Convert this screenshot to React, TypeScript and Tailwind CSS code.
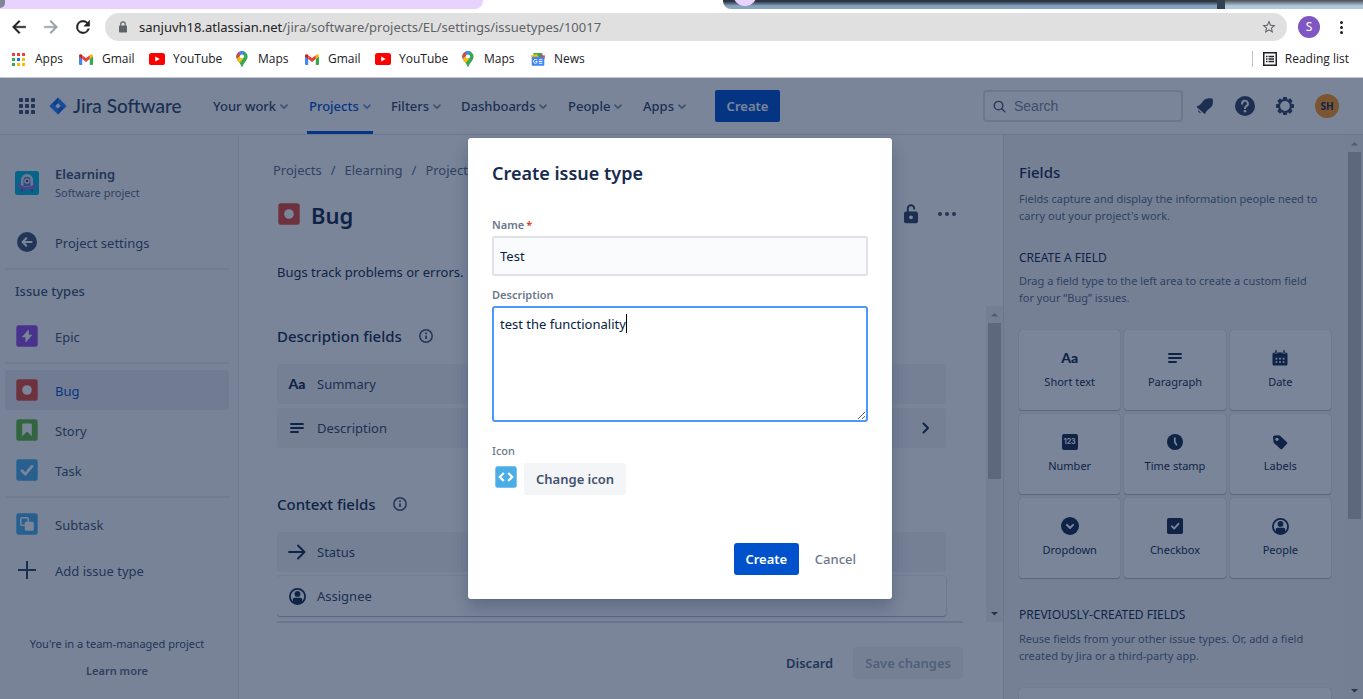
import { useState } from "react";
import type { ReactNode } from "react";

type IconProps = { className?: string };

/* ---------- browser icons ---------- */

function BackIcon({ className = "" }: IconProps) {
  return (
    <svg viewBox="0 0 24 24" className={className} fill="currentColor" aria-hidden="true">
      <path d="M20 11H7.83l5.59-5.59L12 4l-8 8 8 8 1.41-1.41L7.83 13H20v-2z" stroke="currentColor" strokeWidth="0.5" />
    </svg>
  );
}

function ReloadIcon() {
  return (
    <svg viewBox="0 0 24 24" className="size-5" fill="currentColor" aria-hidden="true">
      <path
        d="M17.65 6.35A7.96 7.96 0 0 0 12 4a8 8 0 1 0 7.73 10h-2.08A6 6 0 1 1 12 6c1.66 0 3.14.69 4.22 1.78L13 11h7V4l-2.35 2.35z"
        stroke="currentColor"
        strokeWidth="0.5"
      />
    </svg>
  );
}

function PadlockIcon() {
  return (
    <svg viewBox="0 0 10 12" className="h-3 w-2.5" aria-hidden="true">
      <rect x="1" y="4.5" width="8" height="7" rx="0.8" fill="#5f6368" />
      <path d="M2.8 5V3a2.2 2.2 0 0 1 4.4 0v2" fill="none" stroke="#5f6368" strokeWidth="1.2" />
    </svg>
  );
}

function StarIcon() {
  return (
    <svg viewBox="0 0 24 24" className="size-4" fill="#5f6368" aria-hidden="true">
      <path d="M22 9.24l-7.19-.62L12 2 9.19 8.63 2 9.24l5.46 4.73L5.82 21 12 17.27 18.18 21l-1.63-7.03L22 9.24zM12 15.4l-3.76 2.27 1-4.28-3.32-2.88 4.38-.38L12 6.1l1.71 4.04 4.38.38-3.32 2.88 1 4.28L12 15.4z" />
    </svg>
  );
}

function GoogleAppsIcon() {
  const fills = ["#ea4335", "#ea4335", "#ea4335", "#34a853", "#1a73e8", "#fbbc04", "#34a853", "#fbbc04", "#fbbc04"];
  return (
    <svg viewBox="0 0 13 13" className="size-[13px]" aria-hidden="true">
      {fills.map((fill, i) => (
        <rect key={i} x={(i % 3) * 5} y={Math.floor(i / 3) * 5} width="3" height="3" fill={fill} />
      ))}
    </svg>
  );
}

function GmailIcon() {
  return (
    <svg viewBox="0 0 14 11" className="h-[11px] w-3.5" aria-hidden="true">
      <path d="M0 2v8a1 1 0 0 0 1 1h2.2V4.6z" fill="#4285f4" />
      <path d="M14 2v8a1 1 0 0 1-1 1h-2.2V4.6z" fill="#34a853" />
      <path d="M10.8 1.2 11.5.6C12.6-.3 14 .4 14 1.8V2.6l-3.2 2.5z" fill="#fbbc04" />
      <path d="M3.2 1.2 2.5.6C1.4-.3 0 .4 0 1.8v.8l3.2 2.5z" fill="#c5221f" />
      <path d="M3.2 1.2 7 4.1l3.8-2.9v3.9L7 8 3.2 5.1z" fill="#ea4335" />
    </svg>
  );
}

function YouTubeIcon() {
  return (
    <svg viewBox="0 0 16 12" className="h-3 w-4" aria-hidden="true">
      <rect width="16" height="12" rx="2.6" fill="#f00" />
      <path d="M6.2 3.4v5.2L10.8 6z" fill="#fff" />
    </svg>
  );
}

function MapsIcon() {
  return (
    <svg viewBox="0 0 12 16" className="h-4 w-3" aria-hidden="true">
      <defs>
        <clipPath id="pin">
          <path d="M6 0a5.6 5.6 0 0 1 5.6 5.6c0 2.2-1 3.5-2.4 5.3C7.9 12.5 7 13.5 6.7 15.3c-.2.9-1.2.9-1.4 0C5 13.5 4.1 12.5 2.8 10.9 1.4 9.1.4 7.8.4 5.6A5.6 5.6 0 0 1 6 0z" />
        </clipPath>
      </defs>
      <g clipPath="url(#pin)">
        <rect width="12" height="16" fill="#34a853" />
        <path d="M0 11.5 9 .5 12 3v-3H0z" fill="#4285f4" />
        <path d="M0 0h2L4.5 4 0 9z" fill="#ea4335" />
        <path d="M0 8.5 4 5l3 3-4.5 5.5H0z" fill="#fbbc04" />
      </g>
      <circle cx="6" cy="5.5" r="2.1" fill="#fff" />
    </svg>
  );
}

function NewsIcon() {
  return (
    <svg viewBox="0 0 14 13" className="h-[13px] w-3.5" aria-hidden="true">
      <path d="M2.5 0h9v5h-9z" fill="#34a853" />
      <path d="M0 2.5 6 1l2 4H1z" fill="#fbbc04" />
      <path d="M14 2.5 9 2v4h4.5z" fill="#ea4335" />
      <rect x="0.7" y="3.8" width="12.6" height="9" rx="0.8" fill="#4285f4" />
      <path d="M6 7.3a1.9 1.9 0 1 0 .3 1.3H4.600" fill="none" stroke="#fff" strokeWidth="1" />
      <path d="M7.8 6.7h3.6M7.8 8.5h3.6M7.8 10.3h3.6" stroke="#fff" strokeWidth="0.9" />
    </svg>
  );
}

function ReadingListIcon() {
  return (
    <svg viewBox="0 0 14 14" className="size-3.5" aria-hidden="true">
      <rect x="0.75" y="0.75" width="12.5" height="12.5" fill="none" stroke="#202124" strokeWidth="1.5" />
      <path d="M3 4.5h1.5M3 7h1.5M3 9.5h1.5M5.5 4.5H11M5.5 7H11M5.5 9.5H11" stroke="#202124" strokeWidth="1.3" />
    </svg>
  );
}

/* ---------- product icons ---------- */

function SwitcherIcon() {
  return (
    <svg viewBox="0 0 16 16" className="size-4" fill="#42526e" aria-hidden="true">
      {[0, 6, 12].map((y) =>
        [0, 6, 12].map((x) => <rect key={`${x}-${y}`} x={x} y={y} width="4" height="4" rx="0.8" />),
      )}
    </svg>
  );
}

function JiraMark() {
  return (
    <svg viewBox="0 0 18 18" className="size-[18px]" aria-hidden="true">
      <path d="M9 .5 17.2 8.5a.7.7 0 0 1 0 1L9 17.5.8 9.5a.7.7 0 0 1 0-1z" fill="#2684ff" />
      <path d="M9 .5v5.7L6.2 9 3.8 6.5z" fill="#1868db" />
      <path d="M9 17.5v-5.7L11.8 9l2.4 2.5z" fill="#1868db" />
      <path d="M9 6.3 11.7 9 9 11.7 6.3 9z" fill="#fff" />
    </svg>
  );
}

function ChevronDown() {
  return (
    <svg viewBox="0 0 8 6" className="h-1.5 w-2 opacity-60" aria-hidden="true">
      <path d="M1 1.2 4 4.2l3-3" fill="none" stroke="currentColor" strokeWidth="1.7" strokeLinecap="round" strokeLinejoin="round" />
    </svg>
  );
}

function SearchIcon() {
  return (
    <svg viewBox="0 0 14 14" className="size-[13px] shrink-0" fill="none" stroke="#42526e" strokeWidth="1.4" strokeLinecap="round" aria-hidden="true">
      <circle cx="6" cy="6" r="4.6" />
      <path d="m9.5 9.5 3.3 3.3" />
    </svg>
  );
}

function NotificationIcon() {
  return (
    <svg viewBox="0 0 18 18" className="size-[18px]" fill="#344563" aria-hidden="true">
      <path d="M1 9.2c2-.3 4.3-2.5 6-5C8.5 2 11 1.2 13.5 1.3l2.6.2c.4 0 .7.3.7.7l.1 3c0 2.8-1.2 4.9-3.3 6.3-2 1.4-3.5 2.8-4.3 5-.2.5-.7.6-1 .2L.9 10.2c-.4-.4-.4-.9.1-1z" />
      <path d="M2.2 13a2.3 2.3 0 0 0 2.9 2.9z" />
    </svg>
  );
}

function HelpIcon() {
  return (
    <svg viewBox="0 0 20 20" className="size-5" aria-hidden="true">
      <circle cx="10" cy="10" r="10" fill="#344563" />
      <path d="M7.1 7.7A2.9 2.9 0 1 1 11.3 10.2c-.9.5-1.3.9-1.3 2" fill="none" stroke="#fff" strokeWidth="2" strokeLinecap="round" />
      <circle cx="10" cy="15.2" r="1.3" fill="#fff" />
    </svg>
  );
}

function GearIcon() {
  return (
    <svg viewBox="0 0 18 18" className="size-[18px]" aria-hidden="true">
      <circle cx="9" cy="9" r="5.9" fill="none" stroke="#344563" strokeWidth="2" />
      {[0, 45, 90, 135, 180, 225, 270, 315].map((a) => (
        <path key={a} d="M7.2 0h3.6l.5 2.8H6.7z" fill="#344563" transform={`rotate(${a} 9 9)`} />
      ))}
    </svg>
  );
}

function ProjectAvatar() {
  return (
    <svg viewBox="0 0 24 24" className="size-6" aria-hidden="true">
      <rect width="24" height="24" rx="2.5" fill="#00b8d9" />
      <path d="M7 18v2.5M17 18v2.5" stroke="#5243aa" strokeWidth="1.3" />
      <ellipse cx="12" cy="14.5" rx="9" ry="4.6" fill="#8777d9" />
      <path d="M6 14V9a6 6 0 0 1 12 0v5c-3 2-9 2-12 0z" fill="#dfe5f5" />
      <path d="M8.5 15V9.3a3.5 3.5 0 0 1 7 0V15z" fill="#5e7fc0" />
      <circle cx="12" cy="10" r="2.6" fill="#fff" />
      <circle cx="12" cy="10" r="1.3" fill="#253858" />
    </svg>
  );
}

function CircleBackIcon() {
  return (
    <svg viewBox="0 0 20 20" className="size-5" aria-hidden="true">
      <circle cx="10" cy="10" r="10" fill="#42526e" />
      <path d="M14.5 10H6M9.3 6.3 5.6 10l3.7 3.7" fill="none" stroke="#fff" strokeWidth="2" strokeLinecap="round" strokeLinejoin="round" />
    </svg>
  );
}

function Tile({ fill, children }: { fill: string; children: ReactNode }) {
  return (
    <svg viewBox="0 0 22 22" className="size-[22px]" aria-hidden="true">
      <rect x="0.3" y="0.3" width="21.4" height="21.4" rx="2.5" fill={fill} />
      {children}
    </svg>
  );
}

function EpicIcon() {
  return (
    <Tile fill="#904ee2">
      <path d="M12.5 5v5h3.3L9.8 17v-5H6.3z" fill="#fff" stroke="#fff" strokeWidth="0.6" strokeLinejoin="round" />
    </Tile>
  );
}
function BugIcon() {
  return (
    <Tile fill="#e5493a">
      <circle cx="11" cy="11" r="4.8" fill="#fff" />
    </Tile>
  );
}
function StoryIcon() {
  return (
    <Tile fill="#63ba3c">
      <path d="M6.2 5.5c0-.6.4-1 1-1h7.6c.6 0 1 .4 1 1v11.7L11 12.6l-4.8 4.6z" fill="#fff" />
    </Tile>
  );
}
function TaskIcon() {
  return (
    <Tile fill="#4bade8">
      <path d="m6 11.8 3.4 3.4 6.7-8" fill="none" stroke="#fff" strokeWidth="2.8" strokeLinecap="round" strokeLinejoin="round" />
    </Tile>
  );
}
function SubtaskIcon() {
  return (
    <Tile fill="#4bade8">
      <rect x="4.8" y="4.8" width="7.5" height="7.5" rx="1" fill="none" stroke="#fff" strokeWidth="1.5" />
      <rect x="8.8" y="8.8" width="9" height="9" rx="1.3" fill="#fff" />
    </Tile>
  );
}
function CodeIcon() {
  return (
    <Tile fill="#4bade8">
      <path d="M8.8 7 4.8 11l4 4M13.2 7l4 4-4 4" fill="none" stroke="#fff" strokeWidth="2.2" />
    </Tile>
  );
}

function PlusIcon() {
  return (
    <svg viewBox="0 0 18 18" className="size-[18px]" aria-hidden="true">
      <path d="M9 0v18M0 9h18" stroke="#344563" strokeWidth="2" />
    </svg>
  );
}

function InfoIcon() {
  return (
    <svg viewBox="0 0 14 14" className="size-3.5" aria-hidden="true">
      <circle cx="7" cy="7" r="6.2" fill="none" stroke="#42526e" strokeWidth="1.5" />
      <path d="M7 6.5V10" stroke="#42526e" strokeWidth="1.7" />
      <circle cx="7" cy="4.3" r="1" fill="#42526e" />
    </svg>
  );
}

function LockOpenIcon() {
  return (
    <svg viewBox="0 0 14 20" className="h-5 w-3.5" aria-hidden="true">
      <path d="M3.8 8V4.5a3.2 3.2 0 0 1 6.4 0V5.5" fill="none" stroke="#344563" strokeWidth="1.9" />
      <rect y="7.5" width="14" height="11.7" rx="2" fill="#344563" />
      <circle cx="7" cy="13.3" r="1.9" fill="#fff" />
    </svg>
  );
}

function MoreIcon() {
  return (
    <svg viewBox="0 0 18 4" className="h-1 w-[18px]" fill="#42526e" aria-hidden="true">
      <circle cx="2" cy="2" r="2" />
      <circle cx="9" cy="2" r="2" />
      <circle cx="16" cy="2" r="2" />
    </svg>
  );
}

function TextGlyph() {
  return <span className="font-['Lato'] text-[14px]/4 font-black">Aa</span>;
}
function LinesIcon() {
  return (
    <svg viewBox="0 0 14 12" className="h-3 w-3.5" aria-hidden="true">
      <path d="M1 2h12M1 6h12M1 10h7" stroke="#172b4d" strokeWidth="1.9" strokeLinecap="round" />
    </svg>
  );
}
function ArrowRightIcon() {
  return (
    <svg viewBox="0 0 18 16" className="h-4 w-[18px]" aria-hidden="true">
      <path d="M1 8h15M10 1.5 16.5 8 10 14.5" fill="none" stroke="#172b4d" strokeWidth="1.9" strokeLinecap="round" strokeLinejoin="round" />
    </svg>
  );
}
function PersonIcon() {
  return (
    <svg viewBox="0 0 17 17" className="size-[17px]" aria-hidden="true">
      <circle cx="8.5" cy="8.5" r="7.6" fill="none" stroke="#172b4d" strokeWidth="1.8" />
      <circle cx="8.5" cy="5.9" r="2.9" fill="#172b4d" />
      <path d="M3.8 14v-2.7A1.6 1.6 0 0 1 5.4 9.7h6.2a1.6 1.6 0 0 1 1.6 1.6V14a8 8 0 0 1-9.4 0z" fill="#172b4d" />
    </svg>
  );
}
function CalendarIcon() {
  return (
    <svg viewBox="0 0 16 16" className="size-4" aria-hidden="true">
      <path d="M2 2.5h12a1.5 1.5 0 0 1 1.5 1.5v10a1.5 1.5 0 0 1-1.5 1.5H2A1.5 1.5 0 0 1 .5 14V4A1.5 1.5 0 0 1 2 2.5z" fill="#172b4d" />
      <path d="M4 0v4M12 0v4" stroke="#fff" strokeWidth="2.6" />
      <path d="M4 .8v2.4M12 .8v2.4" stroke="#172b4d" strokeWidth="1.4" strokeLinecap="round" />
      <path d="M3.5 8.7h9M3.5 12h9" stroke="#fff" strokeWidth="1.7" strokeDasharray="1.8 1.8" />
    </svg>
  );
}
function NumberIcon() {
  return (
    <span className="flex size-4 items-center justify-center rounded-xs bg-[#172b4d] font-['Inter'] text-[7px] font-bold text-white">
      123
    </span>
  );
}
function ClockIcon() {
  return (
    <svg viewBox="0 0 16 16" className="size-4" aria-hidden="true">
      <circle cx="8" cy="8" r="8" fill="#172b4d" />
      <path d="M7.8 4v4.3l1.7 2.5" fill="none" stroke="#fff" strokeWidth="1.7" strokeLinecap="round" />
    </svg>
  );
}
function TagIcon() {
  return (
    <svg viewBox="0 0 16 16" className="size-4" aria-hidden="true">
      <path d="M1 3.2C1 2.1 1.6 1.5 2.7 1.4l4-.2c.6 0 1 .2 1.4.5l6.9 6.5c.5.5.5 1.1 0 1.6l-4.9 5.1c-.5.5-1.1.5-1.6 0L2 9c-.3-.4-.5-.8-.5-1.3z" fill="#172b4d" />
      <circle cx="5" cy="5.3" r="1.6" fill="#fff" />
    </svg>
  );
}
function DropdownIcon() {
  return (
    <svg viewBox="0 0 18 18" className="size-[18px]" aria-hidden="true">
      <circle cx="9" cy="9" r="9" fill="#172b4d" />
      <path d="m5.9 7.9 3.1 3.1 3.1-3.1" fill="none" stroke="#fff" strokeWidth="2" strokeLinecap="round" strokeLinejoin="round" />
    </svg>
  );
}
function CheckboxIcon() {
  return (
    <svg viewBox="0 0 16 16" className="size-4" aria-hidden="true">
      <rect width="16" height="16" rx="1.8" fill="#172b4d" />
      <path d="m4.8 8.2 2.3 2.4 4.3-4.8" fill="none" stroke="#fff" strokeWidth="1.9" strokeLinecap="round" strokeLinejoin="round" />
    </svg>
  );
}

/* ---------- browser ---------- */

function TabStrip() {
  return (
    <div className="flex h-[9px] justify-between overflow-hidden bg-white">
      <div className="w-[483px] overflow-hidden rounded-br-lg bg-[#e8d3ff]">
        <div className="h-2 w-[5px] rounded-br-full bg-[#808693]" />
      </div>
      <div className="flex h-full w-[640px] overflow-hidden rounded-bl-lg">
        <div className="flex-1 overflow-hidden bg-linear-to-b from-[#2b3544] from-15% to-[#86a3c0] to-65% pl-2.5">
          <div className="-mt-[18px] size-6 rounded-full bg-[#e8d3ff]" />
        </div>
        <div className="w-2 bg-[#33404f]" />
        <div className="w-[138px] bg-linear-to-b from-[#4b4f52] to-[#b0c8de] to-65%" />
      </div>
    </div>
  );
}

const bookmarks: { label: string; icon: ReactNode; spacing: string }[] = [
  { label: "Apps", icon: <GoogleAppsIcon />, spacing: "w-[67px] gap-2.5" },
  { label: "Gmail", icon: <GmailIcon />, spacing: "w-[70px] gap-[9px]" },
  { label: "YouTube", icon: <YouTubeIcon />, spacing: "w-[87px] gap-2" },
  { label: "Maps", icon: <MapsIcon />, spacing: "w-[69px] gap-2.5" },
  { label: "Gmail", icon: <GmailIcon />, spacing: "w-[70px] gap-[9px]" },
  { label: "YouTube", icon: <YouTubeIcon />, spacing: "w-[87px] gap-2" },
  { label: "Maps", icon: <MapsIcon />, spacing: "w-[69px] gap-2.5" },
  { label: "News", icon: <NewsIcon />, spacing: "w-[70px] gap-[9px]" },
];

function BrowserChrome() {
  return (
    <header className="shrink-0 border-b border-[#c4c7cd] bg-white text-[#202124]">
      <TabStrip />
      <div className="flex h-9 items-center">
        <div className="flex w-[105px] items-center gap-3 pl-[9px]">
          <button aria-label="Back"><BackIcon className="size-5" /></button>
          <button aria-label="Forward" className="text-[#9aa0a6]"><BackIcon className="size-5 rotate-180" /></button>
          <button aria-label="Reload"><ReloadIcon /></button>
        </div>
        <div className="flex h-7 flex-1 items-center gap-[11px] rounded-full bg-[#e0e0e0] pr-2.5 pl-[13px]">
          <PadlockIcon />
          <p className="flex-1 pt-0.5 text-[13px] text-[#5f6368]">
            <span className="text-[#202124]">sanjuvh18.atlassian.net</span>/jira/software/projects/EL/settings/issuetypes/10017
          </p>
          <button aria-label="Bookmark this page"><StarIcon /></button>
        </div>
        <button className="ml-[11px] flex size-[22px] items-center justify-center rounded-full bg-[#7e57c2] text-xs text-white">S</button>
        <button aria-label="Browser menu" className="mr-5 ml-5 flex flex-col gap-0.5">
          <span className="size-[3px] rounded-full bg-[#202124]" />
          <span className="size-[3px] rounded-full bg-[#202124]" />
          <span className="size-[3px] rounded-full bg-[#202124]" />
        </button>
      </div>
      <div className="flex h-8 items-center justify-between pr-3.5 pb-1 pl-3 font-['Open_Sans'] text-xs">
        <nav className="flex h-7 items-center">
          {bookmarks.map((b, i) => (
            <a key={i} href="#" className={`flex items-center ${b.spacing}`}>
              {b.icon}
              {b.label}
            </a>
          ))}
        </nav>
        <button className="flex items-center gap-2 border-l border-[#bdc1c6] pl-2.5">
          <ReadingListIcon />
          Reading list
        </button>
      </div>
    </header>
  );
}

/* ---------- page ---------- */

const menus = [
  { label: "Your work", width: "w-24" },
  { label: "Projects", width: "w-[82px]", active: true },
  { label: "Filters", width: "w-[70px]" },
  { label: "Dashboards", width: "w-[107px]" },
  { label: "People", width: "w-[75px]" },
  { label: "Apps", width: "w-[72px]" },
];

function TopNav() {
  return (
    <nav className="flex h-[57px] shrink-0 items-center border-b border-[#dfe1e6] bg-white pr-6 pl-[19px] shadow-[0_1px_2px_rgba(9,30,66,0.13)]">
      <button aria-label="Switch to"><SwitcherIcon /></button>
      <a href="#" className="ml-3.5 flex w-[164px] items-center gap-1.5 font-['Lato'] text-[19px] font-medium text-[#344563]">
        <JiraMark />
        Jira Software
      </a>
      <div className="flex h-full text-[13px] font-medium text-[#344563]">
        {menus.map((m) => (
          <div key={m.label} className={m.width}>
            <button
              className={
                m.active
                  ? "-mx-0.5 flex h-full items-center gap-1 border-b-3 border-[#0052cc] px-0.5 pt-[5px] text-[#0052cc]"
                  : "flex h-full items-center gap-1 pt-0.5"
              }
            >
              {m.label}
              <ChevronDown />
            </button>
          </div>
        ))}
      </div>
      <button className="h-8 w-[65px] rounded-xs bg-[#0052cc] pt-px text-[13px] font-semibold text-white">Create</button>
      <label className="ml-auto flex h-8 w-[200px] items-center gap-2 rounded border-2 border-[#dfe1e6] px-2">
        <SearchIcon />
        <input
          aria-label="Search"
          placeholder="Search"
          className="w-full font-['Liberation_Sans'] text-sm text-[#42526e] outline-none placeholder:text-[#7a869a]"
        />
      </label>
      <div className="ml-3 flex items-center gap-5">
        <button aria-label="Notifications" className="flex w-5 justify-center"><NotificationIcon /></button>
        <button aria-label="Help"><HelpIcon /></button>
        <button aria-label="Settings" className="flex w-5 justify-center"><GearIcon /></button>
        <button className="size-6 rounded-full bg-[#ff991f] text-[10px] font-bold text-[#172b4d]">SH</button>
      </div>
    </nav>
  );
}

function SideItem({ icon, label, active = false }: { icon: ReactNode; label: string; active?: boolean }) {
  return (
    <a
      href="#"
      className={`flex h-10 items-center gap-4 rounded-[3px] px-2.5 text-[13px] ${active ? "bg-[#ebecf0] text-[#0052cc]" : "text-[#42526e]"}`}
    >
      <span className="flex w-6 justify-center">{icon}</span>
      <span className="pt-1">{label}</span>
    </a>
  );
}

function Sidebar() {
  return (
    <aside className="w-[239px] shrink-0 border-r border-[#ebecf0] bg-[#fafbfc] pr-[9px] pl-[5px]">
      <div className="flex h-[87px] items-center gap-4 px-2.5 pt-[9px]">
        <ProjectAvatar />
        <div className="text-[#42526e]">
          <p className="text-[13px]/5 font-semibold">Elearning</p>
          <p className="text-[11px]/[18px] text-[#5e6c84]">Software project</p>
        </div>
      </div>
      <SideItem icon={<CircleBackIcon />} label="Project settings" />
      <div className="mt-1.5 border-t-2 border-[#ebecf0]" />
      <h2 className="px-2.5 pt-[11px] text-[13px]/5 font-medium text-[#42526e]">Issue types</h2>
      <div className="mt-[15px]"><SideItem icon={<EpicIcon />} label="Epic" /></div>
      <div className="my-1.5 border-t-2 border-[#ebecf0]" />
      <SideItem icon={<BugIcon />} label="Bug" active />
      <SideItem icon={<StoryIcon />} label="Story" />
      <SideItem icon={<TaskIcon />} label="Task" />
      <div className="my-1.5 border-t-2 border-[#ebecf0]" />
      <SideItem icon={<SubtaskIcon />} label="Subtask" />
      <div className="mt-1.5"><SideItem icon={<PlusIcon />} label="Add issue type" /></div>
      <div className="mt-[46px] flex flex-col items-center gap-[11px] text-[11px]/4 text-[#42526e]">
        <p>You're in a team-managed project</p>
        <a href="#" className="font-semibold text-[#5e6c84]">Learn more</a>
      </div>
    </aside>
  );
}

function Scrollbar({ thumb }: { thumb: string }) {
  return (
    <div className="flex w-[17px] shrink-0 flex-col items-center justify-between bg-[#f1f1f1]">
      <div className="flex h-full min-h-0 flex-col items-center">
        <svg viewBox="0 0 17 17" className="size-[17px] shrink-0" aria-hidden="true">
          <path d="M5 10.5h7L8.5 7z" fill="#a3a3a3" />
        </svg>
        <div className={`w-[13px] bg-[#c1c1c1] ${thumb}`} />
      </div>
      <svg viewBox="0 0 17 17" className="size-[17px] shrink-0" aria-hidden="true">
        <path d="M5 7h7l-3.5 3.5z" fill="#505050" />
      </svg>
    </div>
  );
}

function FieldRow({ icon, label, raised = false, expandable = false }: { icon: ReactNode; label: string; raised?: boolean; expandable?: boolean }) {
  return (
    <div
      className={`flex h-10 items-center gap-2 rounded-[3px] px-2 text-[13px] text-[#344563] ${raised ? "bg-white shadow-[0_1px_1px_rgba(9,30,66,0.25),0_0_1px_1px_rgba(9,30,66,0.08)]" : "bg-[#f4f5f7]"}`}
    >
      <span className="flex w-6 items-center justify-center text-[#172b4d]">{icon}</span>
      <span className="pt-px">{label}</span>
      {expandable && (
        <svg viewBox="0 0 8 12" className="mr-2 ml-auto h-3 w-2" aria-hidden="true">
          <path d="m1.5 1.5 4.5 4.5-4.5 4.5" fill="none" stroke="#172b4d" strokeWidth="2" strokeLinecap="round" strokeLinejoin="round" />
        </svg>
      )}
    </div>
  );
}

function SectionTitle({ children }: { children: ReactNode }) {
  return (
    <h2 className="flex items-center gap-[17px] text-[15px]/6 font-medium text-[#172b4d]">
      {children}
      <InfoIcon />
    </h2>
  );
}

function IssueTypeEditor() {
  return (
    <main className="flex min-w-0 flex-1 flex-col bg-white pl-[38px]">
      <div className="pr-10">
        <ol className="-ml-1 flex gap-[9px] pt-[25px] text-[13px]/5 whitespace-nowrap text-[#5e6c84]">
          <li><a href="#">Projects</a></li>
          <li>/</li>
          <li><a href="#">Elearning</a></li>
          <li>/</li>
          <li><a href="#">Project</a></li>
        </ol>
        <div className="mt-[17px] flex h-[34px] items-center">
          <span className="ml-px"><BugIcon /></span>
          <h1 className="ml-[11px] pt-0.5 text-[22px] font-semibold text-[#172b4d]">Bug</h1>
          <button aria-label="Permissions" className="ml-auto"><LockOpenIcon /></button>
          <button aria-label="More actions" className="mr-[7px] ml-5"><MoreIcon /></button>
        </div>
        <p className="mt-[31px] text-[13px]/5 text-[#172b4d]">Bugs track problems or errors.</p>
      </div>
      <div className="mt-6 flex h-[316px] overflow-hidden">
        <div className="min-w-0 flex-1 overflow-hidden">
          <div className="pt-[18px] pr-10">
            <SectionTitle>Description fields</SectionTitle>
            <div className="mt-4 grid gap-1">
              <FieldRow icon={<TextGlyph />} label="Summary" />
              <FieldRow icon={<LinesIcon />} label="Description" expandable />
            </div>
            <div className="mt-11">
              <SectionTitle>Context fields</SectionTitle>
            </div>
            <div className="mt-4 grid gap-1">
              <FieldRow icon={<ArrowRightIcon />} label="Status" />
              <FieldRow icon={<PersonIcon />} label="Assignee" raised />
            </div>
          </div>
        </div>
        <Scrollbar thumb="h-[156px]" />
      </div>
      <footer className="-mt-px mr-10 flex justify-end gap-2 border-t-2 border-[#dfe1e6] pt-6 text-[13px] font-semibold">
        <button className="h-8 px-3 pt-0.5 text-[#42526e]">Discard</button>
        <button disabled className="h-8 rounded-[3px] bg-[#f4f5f7] px-3 pt-0.5 text-[#a5adba]">Save changes</button>
      </footer>
    </main>
  );
}

const fieldTypes: { label: string; icon: ReactNode }[] = [
  { label: "Short text", icon: <TextGlyph /> },
  { label: "Paragraph", icon: <LinesIcon /> },
  { label: "Date", icon: <CalendarIcon /> },
  { label: "Number", icon: <NumberIcon /> },
  { label: "Time stamp", icon: <ClockIcon /> },
  { label: "Labels", icon: <TagIcon /> },
  { label: "Dropdown", icon: <DropdownIcon /> },
  { label: "Checkbox", icon: <CheckboxIcon /> },
  { label: "People", icon: <PersonIcon /> },
];

function FieldsPanel() {
  return (
    <aside className="flex w-[360px] shrink-0 overflow-hidden border-l border-[#dfe1e6] bg-[#f4f5f7]">
      <div className="flex-1 px-[15px] pt-[25px] text-[#172b4d]">
        <h2 className="text-[15px]/6 font-medium">Fields</h2>
        <p className="mt-1.5 pr-2.5 text-[11px]/[17px] text-[#5e6c84]">
          Fields capture and display the information people need to carry out your project's work.
        </p>
        <h3 className="mt-6 text-xs/5">CREATE A FIELD</h3>
        <p className="mt-1 pr-2.5 text-[11px]/[17px] text-[#5e6c84]">
          Drag a field type to the left area to create a custom field for your “Bug” issues.
        </p>
        <div className="mt-6 grid grid-cols-3 gap-1">
          {fieldTypes.map((f) => (
            <button
              key={f.label}
              className="flex h-20 flex-col items-center justify-center gap-2 rounded-[3px] bg-white text-[11px]/4 shadow-[0_1px_1px_rgba(9,30,66,0.25),0_0_1px_rgba(9,30,66,0.31)]"
            >
              <span className="flex h-4 items-center">{f.icon}</span>
              {f.label}
            </button>
          ))}
        </div>
        <h3 className="mt-[27px] text-xs/5">PREVIOUSLY-CREATED FIELDS</h3>
        <p className="mt-[5px] pr-2.5 text-[11px]/[17px] text-[#5e6c84]">
          Reuse fields from your other issue types. Or, add a field created by Jira or a third-party app.
        </p>
        <div className="mt-6 h-10 rounded-[3px] bg-white shadow-[0_1px_1px_rgba(9,30,66,0.25),0_0_1px_rgba(9,30,66,0.31)]" />
      </div>
      <Scrollbar thumb="h-[367px]" />
    </aside>
  );
}

/* ---------- dialog ---------- */

function CreateIssueTypeDialog() {
  const [name, setName] = useState("Test");
  const [description, setDescription] = useState("test the functionality");
  const [editing, setEditing] = useState(false);
  return (
    <div className="absolute inset-0 flex items-start justify-center bg-[#091e42]/54 pt-[60px] pr-[3px]">
      <form
        role="dialog"
        aria-labelledby="dialog-title"
        onSubmit={(e) => e.preventDefault()}
        className="w-[424px] rounded-[3px] bg-white p-6 shadow-[0_0_1px_rgba(9,30,66,0.31),0_8px_16px_rgba(9,30,66,0.25)]"
      >
        <h2 id="dialog-title" className="text-lg/[22px] font-semibold text-[#172b4d]">Create issue type</h2>
        <label htmlFor="name" className="mt-[33px] block text-[11px]/4 font-semibold text-[#6b778c]">
          Name<span className="pl-0.5 text-[#de350b]">*</span>
        </label>
        <input
          id="name"
          value={name}
          onChange={(e) => setName(e.target.value)}
          className="mt-[3px] h-10 w-full rounded-[3px] border-2 border-[#dfe1e6] bg-[#fafbfc] px-1.5 text-[13px] text-[#091e42] outline-none"
        />
        <label htmlFor="description" className="mt-[11px] block text-[11px]/4 font-semibold text-[#6b778c]">Description</label>
        <div className="relative mt-[3px]">
          <textarea
            id="description"
            value={description}
            onFocus={() => setEditing(true)}
            onChange={(e) => setDescription(e.target.value)}
            className="block h-[116px] w-full resize rounded-[3px] border-2 border-[#4c9aff] bg-white px-1.5 py-1.5 text-[13px]/5 text-[#091e42] outline-none"
          />
          {!editing && <span className="absolute top-2 left-[134px] h-[19px] w-px bg-black" />}
        </div>
        <p className="mt-[21px] text-[11px]/4 font-medium text-[#6b778c]">Icon</p>
        <div className="mt-1 flex gap-[7px] pl-[3px]">
          <span className="pt-[3px]"><CodeIcon /></span>
          <button type="button" className="h-8 rounded-[3px] bg-[#f4f5f7] px-3 pt-0.5 text-[13px] font-semibold text-[#42526e]">Change icon</button>
        </div>
        <div className="mt-12 flex justify-end gap-1 text-[13px]">
          <button type="submit" className="h-8 w-[65px] rounded-[3px] bg-[#0052cc] pt-0.5 font-semibold text-white">Create</button>
          <button type="button" className="h-8 px-3 pt-0.5 font-medium text-[#6b778c]">Cancel</button>
        </div>
      </form>
    </div>
  );
}

export default function App() {
  return (
    <div className="flex h-screen flex-col overflow-hidden font-['Noto_Sans','Open_Sans',sans-serif]">
      <BrowserChrome />
      <div className="relative flex min-h-0 flex-1 flex-col overflow-hidden">
        <TopNav />
        <div className="flex min-h-0 flex-1">
          <Sidebar />
          <IssueTypeEditor />
          <FieldsPanel />
        </div>
        <CreateIssueTypeDialog />
      </div>
    </div>
  );
}
